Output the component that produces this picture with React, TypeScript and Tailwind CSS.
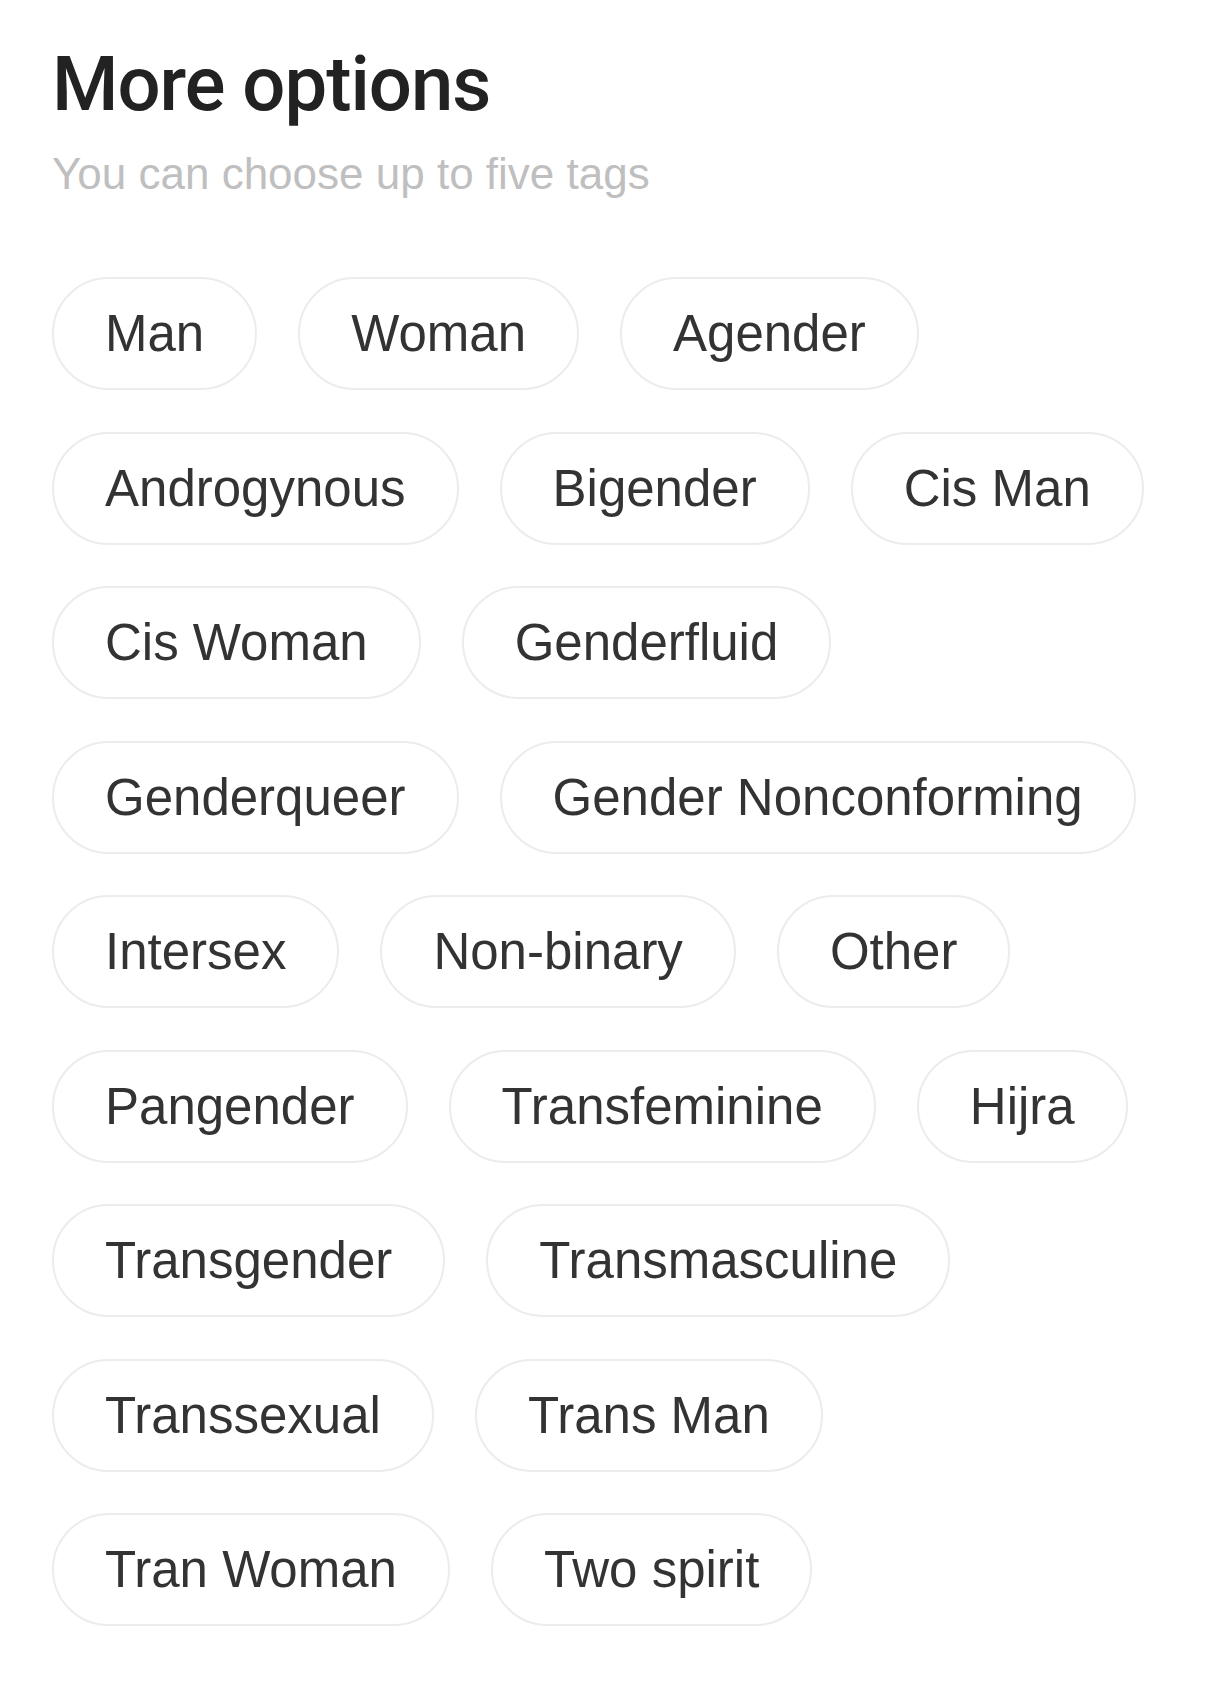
const tags = [
  "Man",
  "Woman",
  "Agender",
  "Androgynous",
  "Bigender",
  "Cis Man",
  "Cis Woman",
  "Genderfluid",
  "Genderqueer",
  "Gender Nonconforming",
  "Intersex",
  "Non-binary",
  "Other",
  "Pangender",
  "Transfeminine",
  "Hijra",
  "Transgender",
  "Transmasculine",
  "Transsexual",
  "Trans Man",
  "Tran Woman",
  "Two spirit",
];

function Tag({ label }: { label: string }) {
  return (
    <button className="flex h-[113px] items-center rounded-full border-2 border-[#ececec] bg-white px-[51px] text-[51px] leading-none text-[#333333]">
      {label}
    </button>
  );
}

export default function App() {
  return (
    <div
      className="min-h-screen bg-white pl-[52px] pr-[40px] pt-[46px]"
      style={{ fontFamily: '"Liberation Sans", Arial, sans-serif' }}
    >
      <h1
        className="text-[76px] font-medium leading-none tracking-[-1px] text-[#222222]"
        style={{ fontFamily: "Roboto, 'Liberation Sans', sans-serif" }}
      >
        More options
      </h1>
      <p className="mt-[30px] text-[44px] leading-none text-[#bfbfbf]">
        You can choose up to five tags
      </p>
      <div className="mt-[81px] flex max-w-[1114px] flex-wrap gap-x-[41px] gap-y-[41.5px]">
        {tags.map((t) => (
          <Tag key={t} label={t} />
        ))}
      </div>
    </div>
  );
}
